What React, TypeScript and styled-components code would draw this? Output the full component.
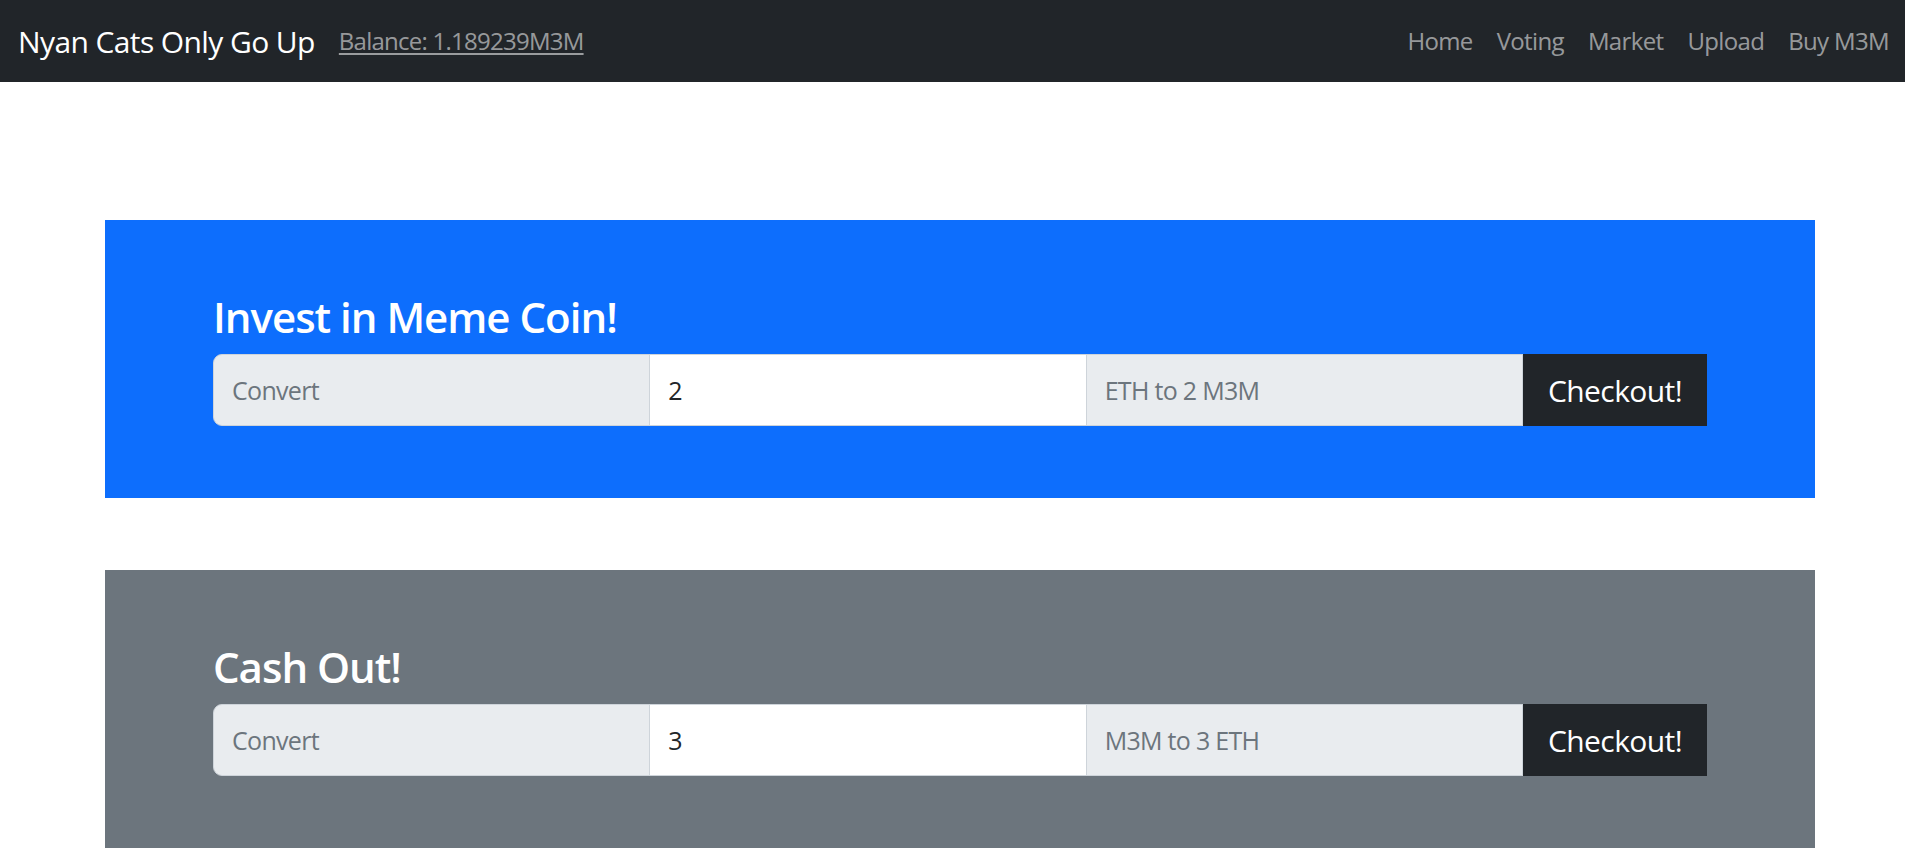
import React from "react";
import styled, { createGlobalStyle } from "styled-components";

const GlobalStyle = createGlobalStyle`
  html, body { margin: 0; padding: 0; background: #ffffff; }
  body {
    font-family: "Open Sans", "Noto Sans", "Liberation Sans", sans-serif;
    color: #212529;
    -webkit-font-smoothing: antialiased;
  }
  * { box-sizing: border-box; }
`;

const Navbar = styled.nav`
  height: 82px;
  background: #212529;
  display: flex;
  align-items: center;
  padding: 0 16px 0 18px;
`;

const Brand = styled.a`
  font-size: 30px;
  line-height: 45px;
  color: #ffffff;
  text-decoration: none;
  margin-right: 24px;
  letter-spacing: -0.6px;
`;

const BalanceLink = styled.a`
  font-size: 24px;
  line-height: 36px;
  color: rgba(255, 255, 255, 0.55);
  text-decoration: underline;
  text-underline-offset: 3px;
  letter-spacing: -0.75px;
`;

const NavList = styled.div`
  margin-left: auto;
  display: flex;
  align-items: center;
  gap: 24px;
`;

const NavLink = styled.a`
  font-size: 24px;
  line-height: 36px;
  color: rgba(255, 255, 255, 0.55);
  text-decoration: none;
  letter-spacing: -0.65px;
`;

const Main = styled.main`
  display: flex;
  flex-direction: column;
  gap: 72px;
  padding: 138px 90px 0 105px;
`;

const Panel = styled.section<{ $bg: string }>`
  background: ${(p) => p.$bg};
  padding: 72px 108px;
`;

const Heading = styled.h3`
  margin: 0 0 12px;
  font-size: 42px;
  line-height: 50px;
  font-weight: 600;
  color: #ffffff;
  letter-spacing: -1px;
`;

const InputGroup = styled.div`
  display: flex;
  height: 72px;
`;

const Field = styled.input<{ $first?: boolean }>`
  flex: 1 1 0;
  min-width: 0;
  height: 72px;
  margin: 0;
  margin-left: ${(p) => (p.$first ? "0" : "-1px")};
  padding: 12px 18px;
  font-family: inherit;
  font-size: 25px;
  line-height: 45px;
  letter-spacing: -0.7px;
  color: #212529;
  background: ${(p) => (p.disabled ? "#e9ecef" : "#ffffff")};
  border: 1px solid #ced4da;
  border-radius: ${(p) => (p.$first ? "9px 0 0 9px" : "0")};
  outline: none;
  opacity: 1;
  &::placeholder {
    color: #6c757d;
    opacity: 1;
  }
`;

const CheckoutButton = styled.button`
  flex: 0 0 184px;
  height: 72px;
  margin: 0;
  padding: 12px 24px;
  font-family: inherit;
  font-size: 30px;
  line-height: 45px;
  letter-spacing: -0.6px;
  color: #ffffff;
  background: #212529;
  border: 1px solid #212529;
  border-radius: 0;
  cursor: pointer;
`;

type Exchange = {
  title: string;
  bg: string;
  amount: string;
  result: string;
};

const exchanges: Exchange[] = [
  { title: "Invest in Meme Coin!", bg: "#0d6efd", amount: "2", result: "ETH to 2 M3M" },
  { title: "Cash Out!", bg: "#6c757d", amount: "3", result: "M3M to 3 ETH" },
];

export default function App() {
  return (
    <>
      <GlobalStyle />
      <Navbar>
        <Brand href="#">Nyan Cats Only Go Up</Brand>
        <BalanceLink href="#">Balance: 1.189239M3M</BalanceLink>
        <NavList>
          {["Home", "Voting", "Market", "Upload", "Buy M3M"].map((l) => (
            <NavLink key={l} href="#">
              {l}
            </NavLink>
          ))}
        </NavList>
      </Navbar>
      <Main>
        {exchanges.map((ex) => (
          <Panel key={ex.title} $bg={ex.bg}>
            <Heading>{ex.title}</Heading>
            <InputGroup>
              <Field $first disabled placeholder="Convert" />
              <Field defaultValue={ex.amount} readOnly />
              <Field disabled placeholder={ex.result} />
              <CheckoutButton>Checkout!</CheckoutButton>
            </InputGroup>
          </Panel>
        ))}
      </Main>
    </>
  );
}
